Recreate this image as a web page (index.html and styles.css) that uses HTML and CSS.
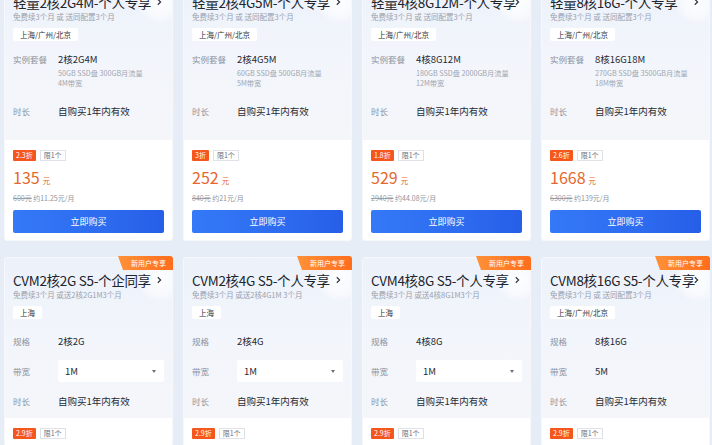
FILE: index.html
```html
<!DOCTYPE html>
<html lang="zh-CN">
<head>
<meta charset="utf-8">
<title>特惠套餐</title>
<link rel="stylesheet" href="styles.css">
</head>
<body>
<div class="page">

  <div class="card">
    <div class="card-top lite">
      <div class="title-row"><span class="title">轻量2核2G4M-个人专享</span><span class="go"><svg viewBox="0 0 8 8" width="8" height="8"><path d="M2.8 1.3 L5.6 4 L2.8 6.7" fill="none" stroke="#2f343d" stroke-width="1.2"/></svg></span></div>
      <div class="sub">免费续3个月 或 送同配置3个月</div>
      <div class="region">上海/广州/北京</div>
      <div class="specs">
        <div class="spec"><span class="k">实例套餐</span><div class="v">2核2G4M<div class="vs">50GB SSD盘 300GB月流量<br>4M带宽</div></div></div>
        <div class="spec"><span class="k">时长</span><div class="v">自购买1年内有效</div></div>
      </div>
    </div>
    <div class="card-bottom">
      <div class="tags"><span class="disc">2.3折</span><span class="lim">限1个</span></div>
      <div class="price"><span class="num">135</span><span class="unit">元</span></div>
      <div class="orig"><s>600元</s> 约11.25元/月</div>
      <button class="buy">立即购买</button>
    </div>
  </div>

  <div class="card">
    <div class="card-top lite">
      <div class="title-row"><span class="title">轻量2核4G5M-个人专享</span><span class="go"><svg viewBox="0 0 8 8" width="8" height="8"><path d="M2.8 1.3 L5.6 4 L2.8 6.7" fill="none" stroke="#2f343d" stroke-width="1.2"/></svg></span></div>
      <div class="sub">免费续3个月 或 送同配置3个月</div>
      <div class="region">上海/广州/北京</div>
      <div class="specs">
        <div class="spec"><span class="k">实例套餐</span><div class="v">2核4G5M<div class="vs">60GB SSD盘 500GB月流量<br>5M带宽</div></div></div>
        <div class="spec"><span class="k">时长</span><div class="v">自购买1年内有效</div></div>
      </div>
    </div>
    <div class="card-bottom">
      <div class="tags"><span class="disc">3折</span><span class="lim">限1个</span></div>
      <div class="price"><span class="num">252</span><span class="unit">元</span></div>
      <div class="orig"><s>840元</s> 约21元/月</div>
      <button class="buy">立即购买</button>
    </div>
  </div>

  <div class="card">
    <div class="card-top lite">
      <div class="title-row"><span class="title">轻量4核8G12M-个人专享</span><span class="go"><svg viewBox="0 0 8 8" width="8" height="8"><path d="M2.8 1.3 L5.6 4 L2.8 6.7" fill="none" stroke="#2f343d" stroke-width="1.2"/></svg></span></div>
      <div class="sub">免费续3个月 或 送同配置3个月</div>
      <div class="region">上海/广州/北京</div>
      <div class="specs">
        <div class="spec"><span class="k">实例套餐</span><div class="v">4核8G12M<div class="vs">180GB SSD盘 2000GB月流量<br>12M带宽</div></div></div>
        <div class="spec"><span class="k">时长</span><div class="v">自购买1年内有效</div></div>
      </div>
    </div>
    <div class="card-bottom">
      <div class="tags"><span class="disc">1.8折</span><span class="lim">限1个</span></div>
      <div class="price"><span class="num">529</span><span class="unit">元</span></div>
      <div class="orig"><s>2940元</s> 约44.08元/月</div>
      <button class="buy">立即购买</button>
    </div>
  </div>

  <div class="card">
    <div class="card-top lite">
      <div class="title-row"><span class="title">轻量8核16G-个人专享</span><span class="go"><svg viewBox="0 0 8 8" width="8" height="8"><path d="M2.8 1.3 L5.6 4 L2.8 6.7" fill="none" stroke="#2f343d" stroke-width="1.2"/></svg></span></div>
      <div class="sub">免费续3个月 或 送同配置3个月</div>
      <div class="region">上海/广州/北京</div>
      <div class="specs">
        <div class="spec"><span class="k">实例套餐</span><div class="v">8核16G18M<div class="vs">270GB SSD盘 3500GB月流量<br>18M带宽</div></div></div>
        <div class="spec"><span class="k">时长</span><div class="v">自购买1年内有效</div></div>
      </div>
    </div>
    <div class="card-bottom">
      <div class="tags"><span class="disc">2.6折</span><span class="lim">限1个</span></div>
      <div class="price"><span class="num">1668</span><span class="unit">元</span></div>
      <div class="orig"><s>6300元</s> 约139元/月</div>
      <button class="buy">立即购买</button>
    </div>
  </div>

  <div class="card">
    <span class="badge">新用户专享</span>
    <div class="card-top">
      <div class="title-row"><span class="title">CVM2核2G S5-个企同享</span><span class="go"><svg viewBox="0 0 8 8" width="8" height="8"><path d="M2.8 1.3 L5.6 4 L2.8 6.7" fill="none" stroke="#2f343d" stroke-width="1.2"/></svg></span></div>
      <div class="sub">免费续3个月 或送2核2G1M3个月</div>
      <div class="region">上海</div>
      <div class="specs cvm">
        <div class="spec"><span class="k">规格</span><div class="v">2核2G</div></div>
        <div class="spec"><span class="k">带宽</span><div class="select">1M<span class="caret"></span></div></div>
        <div class="spec"><span class="k">时长</span><div class="v">自购买1年内有效</div></div>
      </div>
    </div>
    <div class="card-bottom">
      <div class="tags"><span class="disc">2.9折</span><span class="lim">限1个</span></div>
    </div>
  </div>

  <div class="card">
    <span class="badge">新用户专享</span>
    <div class="card-top">
      <div class="title-row"><span class="title">CVM2核4G S5-个人专享</span><span class="go"><svg viewBox="0 0 8 8" width="8" height="8"><path d="M2.8 1.3 L5.6 4 L2.8 6.7" fill="none" stroke="#2f343d" stroke-width="1.2"/></svg></span></div>
      <div class="sub">免费续3个月 或送2核4G1M 3个月</div>
      <div class="region">上海</div>
      <div class="specs cvm">
        <div class="spec"><span class="k">规格</span><div class="v">2核4G</div></div>
        <div class="spec"><span class="k">带宽</span><div class="select">1M<span class="caret"></span></div></div>
        <div class="spec"><span class="k">时长</span><div class="v">自购买1年内有效</div></div>
      </div>
    </div>
    <div class="card-bottom">
      <div class="tags"><span class="disc">2.9折</span><span class="lim">限1个</span></div>
    </div>
  </div>

  <div class="card">
    <span class="badge">新用户专享</span>
    <div class="card-top">
      <div class="title-row"><span class="title">CVM4核8G S5-个人专享</span><span class="go"><svg viewBox="0 0 8 8" width="8" height="8"><path d="M2.8 1.3 L5.6 4 L2.8 6.7" fill="none" stroke="#2f343d" stroke-width="1.2"/></svg></span></div>
      <div class="sub">免费续3个月 或送4核8G1M3个月</div>
      <div class="region">上海</div>
      <div class="specs cvm">
        <div class="spec"><span class="k">规格</span><div class="v">4核8G</div></div>
        <div class="spec"><span class="k">带宽</span><div class="select">1M<span class="caret"></span></div></div>
        <div class="spec"><span class="k">时长</span><div class="v">自购买1年内有效</div></div>
      </div>
    </div>
    <div class="card-bottom">
      <div class="tags"><span class="disc">2.9折</span><span class="lim">限1个</span></div>
    </div>
  </div>

  <div class="card">
    <span class="badge">新用户专享</span>
    <div class="card-top">
      <div class="title-row"><span class="title">CVM8核16G S5-个人专享</span><span class="go"><svg viewBox="0 0 8 8" width="8" height="8"><path d="M2.8 1.3 L5.6 4 L2.8 6.7" fill="none" stroke="#2f343d" stroke-width="1.2"/></svg></span></div>
      <div class="sub">免费续3个月 或 送同配置3个月</div>
      <div class="region">上海/广州/北京</div>
      <div class="specs cvm">
        <div class="spec"><span class="k">规格</span><div class="v">8核16G</div></div>
        <div class="spec"><span class="k">带宽</span><div class="v">5M</div></div>
        <div class="spec"><span class="k">时长</span><div class="v">自购买1年内有效</div></div>
      </div>
    </div>
    <div class="card-bottom">
      <div class="tags"><span class="disc">2.9折</span><span class="lim">限1个</span></div>
    </div>
  </div>

</div>
</body>
</html>
```

FILE: styles.css
```css
* { box-sizing: border-box; }

html, body {
  margin: 0;
  padding: 0;
  background: #e7edf6;
  font-family: "Noto Sans CJK SC", "Noto Sans", sans-serif;
  color: #1f2329;
  overflow: hidden;
}

.page {
  display: grid;
  grid-template-columns: repeat(4, 169px);
  column-gap: 10px;
  row-gap: 16px;
  padding-left: 4px;
  margin-top: -21px;
}

.card {
  position: relative;
  background: #fff;
  border: 1px solid #f6f8fc;
  border-radius: 3px;
}

.card-top {
  position: relative;
  height: 160px;
  padding: 13px 8px 0;
  background: linear-gradient(180deg, #ecf1fa 0%, #f2f5fb 45%, #f4f6fa 100%);
  overflow: hidden;
}

.card-top::before {
  content: "";
  position: absolute;
  right: -12px;
  top: -3px;
  width: 48px;
  height: 48px;
  border-radius: 50%;
  background: radial-gradient(circle, rgba(255,255,255,0.95) 0%, rgba(255,255,255,0.55) 45%, rgba(255,255,255,0) 70%);
}

.title-row {
  position: relative;
  display: flex;
  align-items: center;
  justify-content: space-between;
  height: 18px;
}

.title {
  min-width: 0;
  font-size: 13.5px;
  line-height: 18px;
  white-space: nowrap;
  color: #20242c;
  letter-spacing: -0.3px;
}

.go {
  flex: none;
  display: flex;
  align-items: center;
  justify-content: center;
  width: 10px;
  height: 14px;
}

.sub {
  position: relative;
  margin-top: 1px;
  font-size: 7.5px;
  line-height: 10px;
  color: #9aa1ad;
  white-space: nowrap;
}

.region {
  position: relative;
  width: fit-content;
  margin-top: 6px;
  height: 13px;
  padding: 0 7px;
  font-size: 7.5px;
  line-height: 13px;
  color: #2f343d;
  background: #fff;
  border-radius: 2px;
}

.specs {
  display: flex;
  flex-direction: column;
  gap: 16px;
  margin-top: 11px;
}

.specs.cvm {
  gap: 16px;
  margin-top: 15px;
}

.spec {
  display: flex;
  align-items: flex-start;
  line-height: 14px;
}

.k {
  width: 45px;
  flex: none;
  font-size: 8.5px;
  color: #8c929e;
}

.v {
  font-size: 9.5px;
  color: #262a33;
  white-space: nowrap;
}

.vs {
  margin-top: 2px;
  font-size: 7.2px;
  line-height: 10px;
  color: #a0a6b1;
}

.select {
  position: relative;
  flex: 1;
  height: 22px;
  margin: -4px 0;
  padding-left: 7px;
  font-size: 9.5px;
  line-height: 22px;
  color: #262a33;
  background: #fff;
  border-radius: 2px;
}

.caret {
  position: absolute;
  right: 8px;
  top: 10px;
  width: 0;
  height: 0;
  border-left: 2.5px solid transparent;
  border-right: 2.5px solid transparent;
  border-top: 3px solid #6b707a;
}

.card-bottom {
  padding: 10px 8px 7px;
}

.tags {
  display: flex;
  gap: 4px;
  height: 11px;
}

.disc, .lim {
  display: block;
  height: 11px;
  font-size: 7px;
  line-height: 11px;
  border-radius: 1px;
}

.disc {
  padding: 0 3px;
  background: #f4561b;
  color: #fff;
}

.lim {
  padding: 0 4px;
  background: #fff;
  color: #6a707b;
  box-shadow: inset 0 0 0 0.8px #d6d9df;
}

.price {
  margin-top: 7px;
  height: 18px;
  display: flex;
  align-items: baseline;
  color: #e4672d;
}

.num {
  font-size: 16px;
  line-height: 18px;
}

.unit {
  margin-left: 3px;
  font-size: 7.5px;
}

.orig {
  margin-top: 7px;
  font-size: 7px;
  line-height: 10px;
  color: #8d939e;
}

.orig s {
  color: #9aa0aa;
}

.buy {
  display: block;
  width: 100%;
  height: 23px;
  margin-top: 7px;
  border: 0;
  border-radius: 2px;
  background: linear-gradient(90deg, #3479f7 0%, #2d6bef 60%, #275ee8 100%);
  color: #fff;
  font-family: "Noto Sans CJK SC", sans-serif;
  font-size: 9px;
  line-height: 23px;
  padding: 0;
}

.badge {
  position: absolute;
  z-index: 2;
  top: -2px;
  right: -1px;
  width: 55px;
  height: 14px;
  padding-left: 6px;
  font-size: 7px;
  line-height: 14px;
  text-align: center;
  color: #fff;
  background: linear-gradient(90deg, #ff9138 0%, #ff6e1c 100%);
  border-radius: 0 3px 0 0;
  clip-path: polygon(0 0, 100% 0, 100% 100%, 5px 100%);
}
```
